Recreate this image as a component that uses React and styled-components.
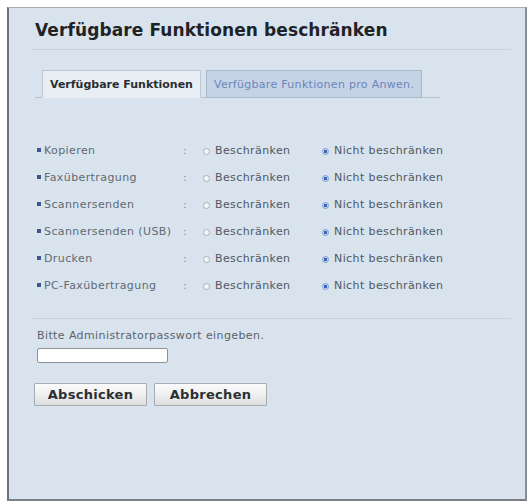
import { createGlobalStyle } from 'styled-components';
import styled from 'styled-components';

const GlobalStyle = createGlobalStyle`
	html, body { margin: 0; padding: 0; background: #ffffff; }
	body { font-family: "DejaVu Sans", Verdana, sans-serif; }
`

const functions = [
	'Kopieren',
	'Faxübertragung',
	'Scannersenden',
	'Scannersenden (USB)',
	'Drucken',
	'PC-Faxübertragung',
]

export default function App() {
	return (
		<>
			<GlobalStyle />
			<Page>
				<Panel>
					<Title>Verfügbare Funktionen beschränken</Title>

					<TabBar>
						<Tab active>Verfügbare Funktionen</Tab>
						<Tab>Verfügbare Funktionen pro Anwen.</Tab>
					</TabBar>

					<List>
						{functions.map((name) => (
							<Row key={name}>
								<Label><Bullet />{name}</Label>
								<Colon>:</Colon>
								<Option><Radio />Beschränken</Option>
								<Option><Radio checked />Nicht beschränken</Option>
							</Row>
						))}
					</List>

					<Footer>
						<Hint>Bitte Administratorpasswort eingeben.</Hint>
						<Password type="password" />
						<Buttons>
							<Button>Abschicken</Button>
							<Button>Abbrechen</Button>
						</Buttons>
					</Footer>
				</Panel>
			</Page>
		</>
	)
}

const Page = styled.div`
	width: 529px;
	height: 503px;
	padding: 7px 2px 2px 7px;
	box-sizing: border-box;
`

const Panel = styled.div`
	height: 100%;
	box-sizing: border-box;
	background: #d8e3ee;
	border-top: 1px solid #a9adb2;
	border-left: 2px solid #6e7277;
	border-right: 2px solid #8a8e93;
	border-bottom: 2px solid #7c8085;
	padding: 0 14px 0 22px;
`

const Title = styled.h1`
	margin: 0;
	padding: 12px 0 9px 4px;
	font-size: 17px;
	font-weight: bold;
	color: #1f2326;
	border-bottom: 1px solid #c9d3dd;
	letter-spacing: 0.1px;
`

const TabBar = styled.div`
	display: flex;
	align-items: flex-end;
	gap: 5px;
	margin: 20px 0 0 4px;
	padding-left: 7px;
	width: 398px;
	border-bottom: 1px solid #b9c2cc;
`

const Tab = styled.div`
	height: 28px;
	box-sizing: border-box;
	display: flex;
	align-items: center;
	padding: 0 7px;
	font-size: 11px;
	letter-spacing: ${({ active }) => active ? '0px' : '0.3px'};
	margin-bottom: -1px;
	border: 1px solid ${({ active }) => active ? '#bfc7d0' : '#a9b8cc'};
	border-bottom-color: ${({ active }) => active ? '#e8eef4' : '#a9b8cc'};
	background: ${({ active }) => active ? '#e8eef4' : '#c4d3e6'};
	color: ${({ active }) => active ? '#2a2e33' : '#6c86b8'};
	font-weight: ${({ active }) => active ? 'bold' : 'normal'};
`

const List = styled.div`
	display: flex;
	flex-direction: column;
	gap: 11px;
	padding: 44px 0 0 6px;
`

const Row = styled.div`
	display: grid;
	grid-template-columns: 146px 20px 119px auto;
	align-items: center;
	height: 16px;
	font-size: 11px;
	letter-spacing: 0.4px;
	color: #5d6670;
`

const Label = styled.div`
	display: flex;
	align-items: center;
	gap: 3px;
	color: #606a74;
	white-space: nowrap;
`

const Bullet = styled.span`
	width: 4px;
	height: 4px;
	background: #3f5592;
`

const Colon = styled.span`
	color: #8c949c;
`

const Option = styled.div`
	display: flex;
	align-items: center;
	gap: 5px;
	color: #505861;
	white-space: nowrap;
`

const Radio = styled.span`
	width: 7px;
	height: 7px;
	flex: none;
	border-radius: 50%;
	box-sizing: border-box;
	border: 1px solid ${({ checked }) => checked ? '#7e9bd0' : '#a7afb8'};
	background: ${({ checked }) => checked ? 'radial-gradient(circle, #3b63b8 0 1.6px, #c9d8f0 2px)' : '#f4f6f8'};
	margin-top: 3px;
`

const Footer = styled.div`
	margin-top: 25px;
	padding: 10px 0 0 6px;
	border-top: 1px solid #c9d3dd;
`

const Hint = styled.div`
	font-size: 11px;
	letter-spacing: 0.4px;
	color: #5b636c;
`

const Password = styled.input`
	display: block;
	margin-top: 6px;
	width: 131px;
	height: 15px;
	box-sizing: border-box;
	border: 1px solid #8c9299;
	border-radius: 2px;
	background: #ffffff;
`

const Buttons = styled.div`
	display: flex;
	gap: 7px;
	margin-top: 20px;
	margin-left: -3px;
`

const Button = styled.button`
	width: 113px;
	height: 23px;
	font-family: "DejaVu Sans", Verdana, sans-serif;
	font-size: 13px;
	font-weight: bold;
	letter-spacing: 0.3px;
	color: #2b2f33;
	border: 1px solid #a7acb2;
	border-radius: 1px;
	background: linear-gradient(#fafafa, #ededed 60%, #dcdcdc);
	padding: 0;
`
